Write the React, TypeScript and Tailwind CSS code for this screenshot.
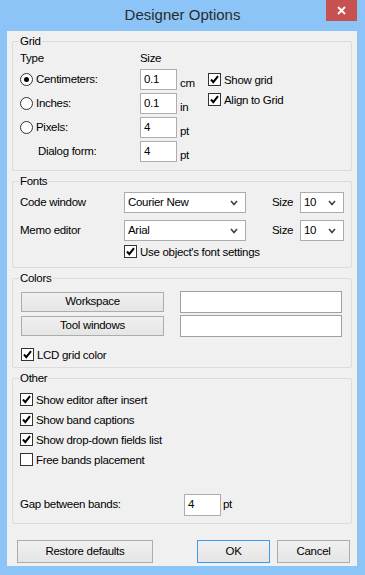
const font = "font-['Liberation_Sans',Arial,sans-serif]";

function Check({ checked = true }: { checked?: boolean }) {
  return (
    <span className="flex h-[13px] w-[13px] shrink-0 items-center justify-center border border-[#333333] bg-white">
      {checked && (
        <svg width="11" height="11" viewBox="0 0 11 11">
          <path d="M2 5.5 L4.3 8.2 L9 2.2" stroke="#000" strokeWidth="2" fill="none" />
        </svg>
      )}
    </span>
  );
}

function Radio({ on = false }: { on?: boolean }) {
  return (
    <span className="flex h-[13px] w-[13px] shrink-0 items-center justify-center rounded-full border border-[#333333] bg-white">
      {on && <span className="h-[5px] w-[5px] rounded-full bg-black" />}
    </span>
  );
}

function CheckRow({ label, checked = true }: { label: string; checked?: boolean }) {
  return (
    <div className="flex h-[13px] items-center">
      <Check checked={checked} />
      <span className="ml-[3px] whitespace-nowrap leading-[14px]">{label}</span>
    </div>
  );
}

function Field({ value, w = 37, h = 21 }: { value: string; w?: number; h?: number }) {
  return (
    <div
      className="flex shrink-0 items-center border border-[#abadb3] bg-white pl-[3px]"
      style={{ width: w, height: h }}
    >
      {value}
    </div>
  );
}

function Select({ value, w }: { value: string; w: number }) {
  return (
    <div
      className="flex h-[21px] shrink-0 items-center justify-between border border-[#acacac] bg-white pl-[3px] pr-[7px]"
      style={{ width: w }}
    >
      <span>{value}</span>
      <svg width="8" height="6" viewBox="0 0 8 6">
        <path d="M1 1 L4 4.5 L7 1" stroke="#404040" strokeWidth="1.6" fill="none" />
      </svg>
    </div>
  );
}

function Button({ label, w, h, focus = false }: { label: string; w: number; h: number; focus?: boolean }) {
  return (
    <div
      className={`flex shrink-0 items-center justify-center border bg-gradient-to-b from-[#f0f0f0] to-[#e5e5e5] ${
        focus ? "border-[#3c9bec]" : "border-[#acacac]"
      }`}
      style={{ width: w, height: h }}
    >
      {label}
    </div>
  );
}

function Group({ title, h, children }: { title: string; h: number; children: React.ReactNode }) {
  return (
    <div className="relative mt-[10px] rounded-[2px] border border-[#dcdcdc]" style={{ height: h }}>
      <span className="absolute left-[6px] top-[-8px] bg-[#f0f0f0] px-[1px] leading-[14px]">{title}</span>
      {children}
    </div>
  );
}

export default function App() {
  return (
    <div className={`flex h-[575px] w-[365px] flex-col bg-[#8cc4f7] text-[11.5px] tracking-[-0.3px] text-black ${font}`}>
      <div className="relative flex h-[31px] items-center justify-center pb-[1px] text-[15px] tracking-normal text-[#2b2b2b]">
        Designer Options
        <div className="absolute right-[8px] top-0 flex h-[21px] w-[31px] items-center justify-center bg-[#c75050]">
          <svg width="9" height="9" viewBox="0 0 9 9">
            <path d="M1 1 L8 8 M8 1 L1 8" stroke="#fff" strokeWidth="1.8" />
          </svg>
        </div>
      </div>

      <div className="ml-[7px] h-[535px] w-[350px] bg-[#f0f0f0] px-[5px]">
        <Group title="Grid" h={130}>
          <div className="flex pl-[7px] pt-[9px]">
            <div className="flex w-[188px] flex-col">
              <div className="flex h-[14px] leading-[14px]">
                <span className="w-[120px]">Type</span>
                <span>Size</span>
              </div>
              <div className="mt-[4px] flex flex-col gap-[3px]">
                {[
                  { label: "Centimeters:", v: "0.1", u: "cm", on: true },
                  { label: "Inches:", v: "0.1", u: "in" },
                  { label: "Pixels:", v: "4", u: "pt" },
                ].map((r) => (
                  <div key={r.label} className="flex h-[21px] items-center">
                    <div className="flex w-[120px] items-center">
                      <Radio on={r.on} />
                      <span className="ml-[3px]">{r.label}</span>
                    </div>
                    <Field value={r.v} />
                    <span className="ml-[3px] self-end leading-[14px]">{r.u}</span>
                  </div>
                ))}
                <div className="flex h-[21px] items-center">
                  <span className="w-[120px] pl-[18px]">Dialog form:</span>
                  <Field value="4" />
                  <span className="ml-[3px] self-end leading-[14px]">pt</span>
                </div>
              </div>
            </div>
            <div className="mt-[22px] flex flex-col gap-[7px]">
              <CheckRow label="Show grid" />
              <CheckRow label="Align to Grid" />
            </div>
          </div>
        </Group>

        <Group title="Fonts" h={87}>
          <div className="flex flex-col pl-[7px] pt-[10px]">
            <div className="flex h-[21px] items-center">
              <span className="w-[104px]">Code window</span>
              <Select value="Courier New" w={122} />
              <span className="ml-[26px] w-[28px]">Size</span>
              <Select value="10" w={44} />
            </div>
            <div className="mt-[7px] flex h-[21px] items-center">
              <span className="w-[104px]">Memo editor</span>
              <Select value="Arial" w={122} />
              <span className="ml-[26px] w-[28px]">Size</span>
              <Select value="10" w={44} />
            </div>
            <div className="ml-[104px] mt-[4px]">
              <CheckRow label="Use object's font settings" />
            </div>
          </div>
        </Group>

        <Group title="Colors" h={90}>
          <div className="flex flex-col pl-[8px] pt-[12px]">
            <div className="flex h-[22px] items-center">
              <Button label="Workspace" w={143} h={20} />
              <div className="ml-[16px] h-[22px] w-[162px] border border-[#a0a0a0] bg-white" />
            </div>
            <div className="mt-[2px] flex h-[22px] items-center">
              <Button label="Tool windows" w={143} h={20} />
              <div className="ml-[16px] h-[22px] w-[162px] border border-[#a0a0a0] bg-white" />
            </div>
            <div className="mt-[11px]">
              <CheckRow label="LCD grid color" />
            </div>
          </div>
        </Group>

        <Group title="Other" h={146}>
          <div className="flex flex-col pl-[7px] pt-[14px]">
            <div className="flex flex-col gap-[7px]">
              <CheckRow label="Show editor after insert" />
              <CheckRow label="Show band captions" />
              <CheckRow label="Show drop-down fields list" />
              <CheckRow label="Free bands placement" checked={false} />
            </div>
            <div className="mt-[28px] flex h-[22px] items-center">
              <span className="w-[164px]">Gap between bands:</span>
              <Field value="4" h={22} />
              <span className="ml-[2px]">pt</span>
            </div>
          </div>
        </Group>

        <div className="mt-[16px] flex items-center">
          <div className="ml-[5px]">
            <Button label="Restore defaults" w={136} h={23} />
          </div>
          <div className="ml-auto mr-[2px] flex gap-[7px]">
            <Button label="OK" w={73} h={23} focus />
            <Button label="Cancel" w={73} h={23} />
          </div>
        </div>
      </div>
    </div>
  );
}
